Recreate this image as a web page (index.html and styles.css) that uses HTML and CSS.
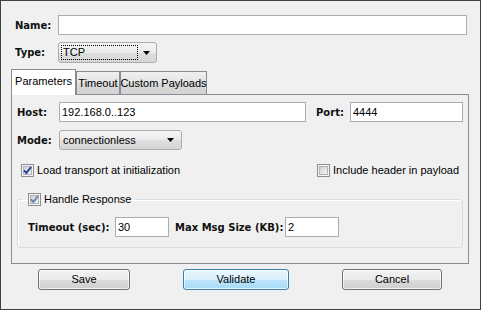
FILE: index.html
```html
<!DOCTYPE html>
<html>
<head>
<meta charset="utf-8">
<link rel="stylesheet" href="styles.css">
</head>
<body>
<div class="window">
  <div class="row top-row row-name">
    <span class="lbl">Name:</span>
    <div class="input input-name"></div>
  </div>
  <div class="row top-row row-type">
    <span class="lbl">Type:</span>
    <div class="select select-type">
      <span class="focus">TCP</span>
      <svg class="arrow" width="7" height="4" viewBox="0 0 7 4"><polygon points="0,0 7,0 3.5,4" fill="#000"/></svg>
    </div>
  </div>
  <div class="tabs">
    <div class="tab tab-params selected">Parameters</div>
    <div class="tab tab-timeout">Timeout</div>
    <div class="tab tab-custom">Custom Payloads</div>
  </div>
  <div class="panel">
    <div class="row row-host">
      <span class="lbl plbl">Host:</span>
      <div class="input input-host">192.168.0..123</div>
      <span class="lbl port-lbl">Port:</span>
      <div class="input input-port">4444</div>
    </div>
    <div class="row row-mode">
      <span class="lbl plbl">Mode:</span>
      <div class="select select-mode">
        <span class="sel-text">connectionless</span>
        <svg class="arrow" width="7" height="4" viewBox="0 0 7 4"><polygon points="0,0 7,0 3.5,4" fill="#000"/></svg>
      </div>
    </div>
    <div class="row row-checks">
      <label class="check">
        <svg width="13" height="13" viewBox="0 0 13 13">
          <defs>
            <linearGradient id="cb" x1="0" y1="0" x2="1" y2="1">
              <stop offset="0" stop-color="#cbcfd5"/>
              <stop offset="1" stop-color="#f7f7f7"/>
            </linearGradient>
          </defs>
          <rect x="0.5" y="0.5" width="12" height="12" fill="#f4f4f4" stroke="#8e8f8f"/>
          <rect x="2.5" y="2.5" width="8" height="8" fill="url(#cb)" stroke="#b0b4ba"/>
          <polyline points="3,6.3 5.4,9 10,3" fill="none" stroke="#24418f" stroke-width="1.9"/>
        </svg>
        <span>Load transport at initialization</span>
      </label>
      <label class="check">
        <svg width="13" height="13" viewBox="0 0 13 13">
          <rect x="0.5" y="0.5" width="12" height="12" fill="#f4f4f4" stroke="#8e8f8f"/>
          <rect x="2.5" y="2.5" width="8" height="8" fill="url(#cb)" stroke="#b0b4ba"/>
        </svg>
        <span>Include header in payload</span>
      </label>
    </div>
    <fieldset class="group">
      <legend class="legend">
        <label class="check">
          <svg width="13" height="13" viewBox="0 0 13 13">
            <rect x="0.5" y="0.5" width="12" height="12" fill="#f4f4f4" stroke="#8e8f8f"/>
            <rect x="2.5" y="2.5" width="8" height="8" fill="url(#cb)" stroke="#b0b4ba"/>
            <polyline points="3,6.3 5.4,9 10,3" fill="none" stroke="#6d7fad" stroke-width="1.9"/>
          </svg>
          <span>Handle Response</span>
        </label>
      </legend>
      <div class="row row-timeout">
        <span class="lbl lbl-timeout">Timeout (sec):</span>
        <div class="input input-small">30</div>
        <span class="lbl lbl-size">Max Msg Size (KB):</span>
        <div class="input input-small">2</div>
      </div>
    </fieldset>
  </div>
  <div class="buttons">
    <div class="btn btn-save">Save</div>
    <div class="btn btn-validate default">Validate</div>
    <div class="btn btn-cancel">Cancel</div>
  </div>
</div>
</body>
</html>
```

FILE: styles.css
```css
* {
  box-sizing: border-box;
}

html,
body {
  margin: 0;
  padding: 0;
}

body {
  font-family: "Liberation Sans", Arial, sans-serif;
  font-size: 11px;
  line-height: 13px;
  color: #000;
  background: #f0f0f0;
}

.window {
  width: 481px;
  height: 310px;
  border: 1px solid #404040;
  background: #f0f0f0;
  padding: 0 11px 0 10px;
  display: flex;
  flex-direction: column;
}

.row {
  display: flex;
  align-items: center;
}

.lbl {
  font-family: "DejaVu Sans", Verdana, sans-serif;
  font-size: 10px;
  font-weight: bold;
  color: #111;
  white-space: nowrap;
}

.top-row {
  padding-left: 4px;
  padding-right: 2px;
}

.top-row .lbl {
  width: 43px;
}

.row-name {
  margin-top: 14px;
}

.row-type {
  margin-top: 7px;
}

.input {
  height: 20px;
  border: 1px solid #abadb3;
  background: #fff;
  padding-left: 2px;
  display: flex;
  align-items: center;
  white-space: nowrap;
}

.input-name {
  flex: 1;
}

.select {
  height: 21px;
  border: 1px solid #acacac;
  border-radius: 3px;
  background: linear-gradient(#f5f5f5, #ebebeb 50%, #dedede 51%, #d6d6d6);
  display: flex;
  align-items: center;
  justify-content: space-between;
}

.select-type {
  width: 99px;
  padding: 0 6px 0 2px;
}

.focus {
  width: 77px;
  height: 15px;
  border: 1px dotted #000;
  padding-left: 1px;
  line-height: 13px;
}

.arrow {
  display: block;
}

/* Tabs */
.tabs {
  display: flex;
  align-items: flex-end;
  height: 25px;
  margin-top: 6px;
  position: relative;
  z-index: 1;
}

.tab {
  height: 23px;
  border: 1px solid #898c95;
  border-bottom: none;
  background: linear-gradient(#f0f0f0, #e4e4e4 50%, #d9d9d9 51%, #d4d4d4);
  display: flex;
  align-items: center;
  justify-content: center;
  white-space: nowrap;
  padding-top: 1px;
}

.tab.selected {
  height: 26px;
  margin-bottom: -1px;
  background: #fff;
  padding-top: 0;
  padding-bottom: 3px;
}

.tab-params {
  width: 65px;
}

.tab-timeout {
  width: 44px;
}

.tab-custom {
  width: 87px;
}

/* Panel */
.panel {
  height: 170px;
  border: 1px solid #898c95;
  background: #f0f0f0;
  padding: 7px 5px 0 5px;
  display: flex;
  flex-direction: column;
}

.plbl {
  width: 42px;
}

.input-host {
  width: 247px;
}

.port-lbl {
  margin-left: 10px;
  width: 34px;
}

.input-port {
  flex: 1;
}

.row-mode {
  margin-top: 8px;
}

.select-mode {
  width: 123px;
  height: 20px;
  padding: 0 7px 0 3px;
}

.row-checks {
  margin-top: 14px;
  padding-left: 4px;
  padding-right: 4px;
  justify-content: space-between;
}

.check {
  display: flex;
  align-items: center;
  gap: 3px;
  white-space: nowrap;
}

.check svg {
  display: block;
}

.group {
  margin: 16px 0 0 0;
  padding: 0 0 10px 0;
  border: 1px solid #d5dfe5;
  border-radius: 3px;
  box-shadow: inset 1px 1px 0 #fff;
  min-width: 0;
}

.legend {
  margin-left: 5px;
  padding: 0 5px;
}

.row-timeout {
  margin-top: 11px;
  padding-left: 10px;
}

.lbl-timeout {
  width: 87px;
}

.input-small {
  width: 54px;
}

.lbl-size {
  margin-left: 6px;
  width: 110px;
}

/* Buttons */
.buttons {
  display: flex;
  gap: 53px;
  margin-top: 5px;
  padding-left: 27px;
}

.btn {
  height: 21px;
  border: 1px solid #707070;
  border-radius: 3px;
  background: linear-gradient(#f2f2f2, #ebebeb 50%, #dddddd 51%, #cfcfcf);
  box-shadow: inset 0 0 0 1px rgba(255, 255, 255, 0.7);
  display: flex;
  align-items: center;
  justify-content: center;
}

.btn.default {
  border-color: #3c7fb1;
  background: linear-gradient(#eaf6fd, #d9f0fc 50%, #bee6fd 51%, #a7d9f5);
}

.btn-save {
  width: 92px;
}

.btn-validate {
  width: 106px;
}

.btn-cancel {
  width: 100px;
}
```
